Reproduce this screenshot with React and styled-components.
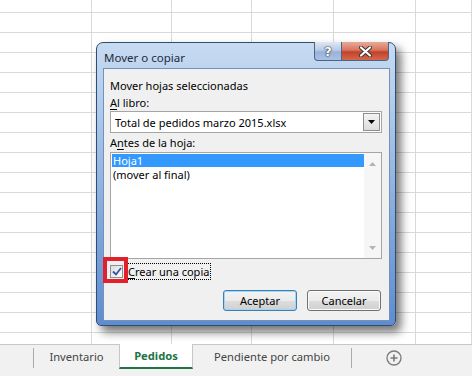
import styled, { createGlobalStyle } from 'styled-components';

const Global = createGlobalStyle`
	html, body { margin: 0; padding: 0; }
	body { width: 472px; height: 376px; overflow: hidden; background: #fff; }
	#root { width: 472px; height: 376px; }
`;

const Page = styled.div`
	width: 472px;
	height: 376px;
	display: flex;
	flex-direction: column;
	font-family: 'Noto Sans', 'Open Sans', sans-serif;
`;

const Sheet = styled.div`
	position: relative;
	flex: 1;
	display: flex;
	background-color: #fff;
	background-image: repeating-linear-gradient(to bottom, transparent 0 19px, #d9d9d9 19px 20px);
	background-position: 0 -7px;
`;

const Column = styled.div`
	width: ${({ w }) => w}px;
	flex-shrink: 0;
	border-right: 1px solid #d9d9d9;
	box-sizing: border-box;
`;

const Dialog = styled.div`
	position: absolute;
	left: 96px;
	top: 42px;
	width: 300px;
	height: 284px;
	box-sizing: border-box;
	border: 1px solid #2f4c73;
	border-radius: 7px 7px 5px 5px;
	background: linear-gradient(to bottom, #c7dbf1 0%, #b3cdec 20%, #86abdd 60%, #5e8ccf 100%);
	box-shadow: 5px 6px 10px rgba(0, 0, 0, 0.55);
	display: flex;
	flex-direction: column;
	padding: 0 5px 4px 6px;
`;

const TitleBar = styled.div`
	height: 25px;
	display: flex;
	align-items: flex-start;
`;

const Title = styled.div`
	font-size: 11.5px;
	color: #1e2a3a;
	margin-top: 7px;
	margin-left: 1px;
	flex: 1;
`;

const CaptionButtons = styled.div`
	display: flex;
	margin-top: -1px;
	margin-right: 1px;
`;

const CaptionButton = styled.div`
	height: 19px;
	width: ${({ w }) => w}px;
	box-sizing: border-box;
	border: 1px solid #4c6488;
	border-top: none;
	display: flex;
	align-items: center;
	justify-content: center;
	color: #fff;
	font-family: 'DejaVu Sans', sans-serif;
	font-weight: bold;
	font-size: 13px;
	text-shadow: 0 0 2px #2a2a2a, 0 0 1px #000;
	background: ${({ close }) => close
		? 'linear-gradient(to bottom, #e8a999 0%, #d7765f 45%, #c3412b 55%, #d4694a 100%)'
		: 'linear-gradient(to bottom, #dfe8f4 0%, #b8cbe6 45%, #98b2d8 55%, #a9c2e4 100%)'};
	border-radius: ${({ close }) => close ? '0 0 4px 0' : '0 0 0 4px'};
	& + & { border-left: none; }
`;

const Client = styled.div`
	flex: 1;
	background: #f0f0f0;
	border: 1px solid #7491bb;
	padding: 9px 7px 0 6px;
	display: flex;
	flex-direction: column;
	font-size: 11px;
	color: #000;
`;

const Label = styled.div`
	height: 16px;
	line-height: 16px;
	margin-bottom: ${({ mb }) => mb || 0}px;
	white-space: nowrap;
`;

const Combo = styled.div`
	height: 22px;
	box-sizing: border-box;
	border: 1px solid #a5a5a5;
	background: #fff;
	display: flex;
	align-items: center;
	padding-left: 4px;
	margin-bottom: 2px;
`;

const ComboText = styled.div`
	flex: 1;
`;

const ComboButton = styled.div`
	width: 17px;
	height: 18px;
	margin-right: 1px;
	box-sizing: border-box;
	border: 1px solid #8e8e8e;
	background: linear-gradient(to bottom, #f4f4f4, #dcdcdc);
	display: flex;
	align-items: center;
	justify-content: center;
`;

const List = styled.div`
	height: 107px;
	box-sizing: border-box;
	border: 1px solid #a5a5a5;
	background: #fff;
	display: flex;
	margin-top: 1px;
`;

const Items = styled.div`
	flex: 1;
	padding: 1px 0 0 1px;
`;

const Item = styled.div`
	height: 13px;
	line-height: 13px;
	padding-left: 1px;
	margin-bottom: 1px;
	white-space: nowrap;
	background: ${({ selected }) => selected ? '#3399ff' : 'transparent'};
	color: ${({ selected }) => selected ? '#fff' : '#000'};
`;

const ScrollBar = styled.div`
	width: 17px;
	background: #f6f6f6;
	display: flex;
	flex-direction: column;
	justify-content: space-between;
	align-items: center;
	padding: 9px 0 8px;
`;

const CheckRow = styled.div`
	height: 18px;
	margin-top: 3px;
	display: flex;
	align-items: center;
	position: relative;
`;

const Marker = styled.div`
	position: absolute;
	left: -7px;
	top: -5px;
	width: 25px;
	height: 26px;
	box-sizing: border-box;
	border: 4px solid #e0202b;
`;

const Box = styled.div`
	width: 13px;
	height: 13px;
	box-sizing: border-box;
	border: 1px solid #8f8f8f;
	background: linear-gradient(135deg, #dcdcdc, #fff);
	display: flex;
	align-items: center;
	justify-content: center;
	margin-right: 4px;
`;

const FocusText = styled.div`
	outline: 1px dotted #000;
	padding: 0 1px;
	line-height: 15px;
`;

const Buttons = styled.div`
	display: flex;
	justify-content: flex-end;
	gap: 10px;
	margin-top: 10px;
	padding-right: 1px;
`;

const Button = styled.div`
	width: 74px;
	height: 21px;
	box-sizing: border-box;
	border: 1px solid ${({ primary }) => primary ? '#3c7fb1' : '#707070'};
	box-shadow: ${({ primary }) => primary ? 'inset 0 0 0 1px #9fd5f5' : 'inset 0 0 0 1px #fafafa'};
	border-radius: 3px;
	background: linear-gradient(to bottom, #f3f3f3 0%, #ebebeb 50%, #dddddd 51%, #cfcfcf 100%);
	display: flex;
	align-items: center;
	justify-content: center;
`;

const U = styled.span`
	text-decoration: underline;
	text-underline-offset: 2px;
`;

const TabBar = styled.div`
	height: 32px;
	box-sizing: border-box;
	border-top: 1px solid #c6c6c6;
	background: #f1f1f1;
	display: flex;
	align-items: flex-start;
	padding-left: 33px;
	font-size: 11.2px;
`;

const Tab = styled.div`
	box-sizing: border-box;
	display: flex;
	align-items: center;
	justify-content: center;
	width: ${({ w }) => w}px;
	margin-top: ${({ active }) => active ? -1 : 0}px;
	height: ${({ active }) => active ? 25 : 24}px;
	color: ${({ active }) => active ? '#217346' : '#444'};
	font-weight: ${({ active }) => active ? 700 : 400};
	background: ${({ active }) => active ? '#fff' : 'transparent'};
	border-left: 1px solid ${({ active }) => active ? '#c6c6c6' : 'transparent'};
	border-right: 1px solid ${({ active }) => active ? '#c6c6c6' : 'transparent'};
	border-bottom: 2px solid ${({ active }) => active ? '#217346' : 'transparent'};
	white-space: nowrap;
`;

const Separator = styled.div`
	width: 1px;
	height: 20px;
	margin-top: 3px;
	background: #ababab;
`;

const AddButton = styled.div`
	margin-left: 34px;
	margin-top: 5px;
	display: flex;
`;

const columns = [92, 80, 80, 82, 82, 56];

const App = () => (
	<Page>
		<Global />
		<Sheet>
			{columns.map((w, i) => <Column key={i} w={w} />)}
			<Dialog>
				<TitleBar>
					<Title>Mover o copiar</Title>
					<CaptionButtons>
						<CaptionButton w={28}>?</CaptionButton>
						<CaptionButton w={47} close>
							<svg width="13" height="11" viewBox="0 0 13 11">
								<path d="M2 1.5 L11 9.5 M11 1.5 L2 9.5" stroke="#333" strokeWidth="4" strokeLinecap="round" />
								<path d="M2 1.5 L11 9.5 M11 1.5 L2 9.5" stroke="#fff" strokeWidth="2.2" strokeLinecap="round" />
							</svg>
						</CaptionButton>
					</CaptionButtons>
				</TitleBar>
				<Client>
					<Label mb={1}>Mover hojas seleccionadas</Label>
					<Label><U>A</U>l libro:</Label>
					<Combo>
						<ComboText>Total de pedidos marzo 2015.xlsx</ComboText>
						<ComboButton>
							<svg width="7" height="4" viewBox="0 0 7 4"><path d="M0 0 H7 L3.5 4 Z" fill="#000" /></svg>
						</ComboButton>
					</Combo>
					<Label>A<U>n</U>tes de la hoja:</Label>
					<List>
						<Items>
							<Item selected>Hoja1</Item>
							<Item>(mover al final)</Item>
						</Items>
						<ScrollBar>
							<svg width="7" height="4" viewBox="0 0 7 4"><path d="M0 4 H7 L3.5 0 Z" fill="#b4b4b4" /></svg>
							<svg width="7" height="4" viewBox="0 0 7 4"><path d="M0 0 H7 L3.5 4 Z" fill="#b4b4b4" /></svg>
						</ScrollBar>
					</List>
					<CheckRow>
						<Marker />
						<Box>
							<svg width="10" height="9" viewBox="0 0 10 9">
								<path d="M1 4.5 L4 7.5 L9 1" stroke="#2f55a5" strokeWidth="1.8" fill="none" />
							</svg>
						</Box>
						<FocusText><U>C</U>rear una copia</FocusText>
					</CheckRow>
					<Buttons>
						<Button primary>Aceptar</Button>
						<Button>Cancelar</Button>
					</Buttons>
				</Client>
			</Dialog>
		</Sheet>
		<TabBar>
			<Separator />
			<Tab w={85}>Inventario</Tab>
			<Tab active w={74}>Pedidos</Tab>
			<Tab w={158}>Pendiente por cambio</Tab>
			<Separator />
			<AddButton>
				<svg width="16" height="16" viewBox="0 0 16 16">
					<circle cx="8" cy="8" r="7" fill="none" stroke="#7a7a7a" strokeWidth="1.3" />
					<path d="M8 4.5 V11.5 M4.5 8 H11.5" stroke="#7a7a7a" strokeWidth="1.6" />
				</svg>
			</AddButton>
		</TabBar>
	</Page>
);

export default App;
